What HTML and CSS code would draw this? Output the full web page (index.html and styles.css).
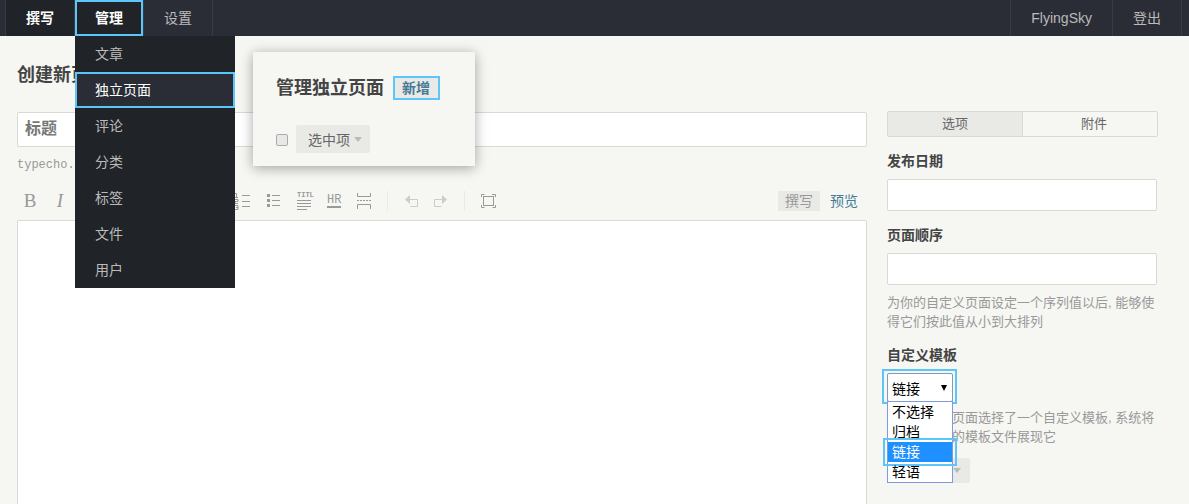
FILE: index.html
```html
<!DOCTYPE html>
<html lang="zh-CN">
<head>
<meta charset="utf-8">
<title>创建新页面</title>
<link rel="stylesheet" href="styles.css">
</head>
<body>
<nav class="topbar">
  <ul class="nav-left">
    <li class="nav-item nav-write"><a>撰写</a></li>
    <li class="nav-item nav-manage">
      <a class="inspected">管理</a>
      <ul class="dropdown">
        <li>文章</li>
        <li class="current inspected">独立页面</li>
        <li>评论</li>
        <li>分类</li>
        <li>标签</li>
        <li>文件</li>
        <li>用户</li>
      </ul>
    </li>
    <li class="nav-item"><a>设置</a></li>
  </ul>
  <ul class="nav-right">
    <li class="nav-item"><a>FlyingSky</a></li>
    <li class="nav-item"><a>登出</a></li>
  </ul>
</nav>

<main class="page">
  <h1 class="page-title">创建新页面</h1>
  <div class="columns">
    <section class="editor-col">
      <div class="title-box">标题</div>
      <p class="slug">typecho.x/index.php/</p>
      <div class="toolbar">
        <span class="tool serif bold">B</span>
        <span class="tool serif italic">I</span>
        <span class="sep"></span>
        <span class="tool"></span><span class="tool"></span><span class="tool"></span><span class="tool"></span>
        <span class="sep"></span>
        <span class="tool"><svg class="ico" viewBox="0 0 20 20"><path d="M1 2.500h1.500v4M1 6.500h3M1 8.500h3v2h-3v2h3M1 14.500h3v2h-2M4 16.500v2h-3M8 4.500h8M8 10.500h8M8 15.500h8"/></svg></span>
        <span class="tool"><svg class="ico" viewBox="0 0 20 20"><path d="M8 4.500h8M8 9.500h8M8 14.500h8"/><path class="fill" d="M3 3h3v3h-3zM3 8h3v3h-3zM3 13h3v3h-3z"/></svg></span>
        <span class="tool"><svg class="ico" viewBox="0 0 20 20"><text class="ico-text" x="3" y="6">TITL</text><path d="M3 9.500h14M3 12.500h14M3 15.500h14M3 18.500h10"/></svg></span>
        <span class="tool"><svg class="ico" viewBox="0 0 20 20"><text class="ico-text large" x="3" y="12">HR</text><path class="thick" d="M3 16h14"/></svg></span>
        <span class="tool"><svg class="ico" viewBox="0 0 20 20"><path d="M3.500 2v3.500h13v-3.500M3.500 18v-4.500h13v4.500"/><path d="M3 9.500h14" stroke-dasharray="2 1"/></svg></span>
        <span class="sep"></span>
        <span class="tool"><svg class="ico off" viewBox="0 0 20 20"><path d="M9 8.500h7.500v7h-7"/><path class="fill" d="M9 4v9l-5-4.500z"/></svg></span>
        <span class="tool"><svg class="ico off" viewBox="0 0 20 20"><path d="M11 8.500h-7.500v7h7"/><path class="fill" d="M11 4v9l5-4.500z"/></svg></span>
        <span class="sep"></span>
        <span class="tool"><svg class="ico" viewBox="0 0 20 20"><rect x="5.500" y="5.500" width="10" height="9"/><path d="M3.500 6v-2.500h3M14 3.500h3.500v2.500M17.500 14v2.500h-3M6.500 16.500h-3v-2.500"/></svg></span>
        <div class="mode-tabs"><span class="mode active">撰写</span><span class="mode link">预览</span></div>
      </div>
      <div class="editor"></div>
    </section>

    <aside class="side-col">
      <div class="tabs"><span class="tab active">选项</span><span class="tab second">附件</span></div>
      <div class="field first">
        <label class="label">发布日期</label>
        <div class="input"></div>
      </div>
      <div class="field">
        <label class="label">页面顺序</label>
        <div class="input"></div>
        <p class="desc">为你的自定义页面设定一个序列值以后, 能够使得它们按此值从小到大排列</p>
      </div>
      <div class="field">
        <label class="label">自定义模板</label>
        <div class="select-wrap">
          <div class="select-box"><span>链接</span><span class="select-arrow"></span></div>
          <span class="select-ring"></span>
          <ul class="select-list">
            <li>不选择</li>
            <li>归档</li>
            <li class="selected">链接<span class="selected-ring"></span></li>
            <li>轻语</li>
          </ul>
        </div>
        <p class="desc close">如果你为此页面选择了一个自定义模板, 系统将按照你选择的模板文件展现它</p>
      </div>
      <span class="btn more">高级选项<i class="caret"></i></span>
    </aside>
  </div>

  <div class="popup">
    <div class="popup-head">
      <h2 class="popup-title">管理独立页面</h2>
      <span class="add-btn">新增</span>
    </div>
    <div class="popup-ops">
      <input class="check" type="checkbox">
      <span class="btn">选中项<i class="caret"></i></span>
    </div>
  </div>
</main>
</body>
</html>
```

FILE: styles.css
```css
* { box-sizing: border-box; }
html, body { margin: 0; padding: 0; }
body {
  height: 504px;
  overflow: hidden;
  background: #f6f6f3;
  color: #444;
  font-family: "Liberation Sans", "Noto Sans CJK SC", sans-serif;
  font-size: 14px;
  position: relative;
}
ul { list-style: none; margin: 0; padding: 0; }
p, h1, h2 { margin: 0; }

.topbar {
  height: 36px;
  background: #2a2d36;
  display: flex;
  justify-content: space-between;
  padding: 0 7px 0 5px;
}
.nav-left, .nav-right { display: flex; }
.nav-left { border-left: 1px solid #383b44; }
.nav-right { border-left: 1px solid #383b44; }
.nav-item { position: relative; border-right: 1px solid #383b44; }
.nav-item a {
  display: block;
  height: 36px;
  line-height: 36px;
  padding: 0 20px;
  color: #bbb;
}
.nav-write a { background: #202328; color: #fff; font-weight: 700; }
.nav-manage a { background: #202328; color: #fff; font-weight: 700; }
.inspected { box-shadow: inset 0 0 0 2px #5cc6fb; }

.dropdown {
  position: absolute;
  left: 0;
  top: 36px;
  width: 160px;
  background: #202328;
  z-index: 10;
}
.dropdown li {
  height: 36px;
  line-height: 36px;
  padding-left: 20px;
  color: #bbb;
}
.dropdown li.current { background: #2a2d36; color: #fff; }

.page { padding: 0 0 0 17px; }
.page-title {
  font-size: 18px;
  line-height: 24px;
  padding-top: 27px;
  height: 75px;
  font-weight: 700;
  color: #444;
}
.columns {
  display: grid;
  grid-template-columns: 850px 271px;
  column-gap: 20px;
  align-items: start;
}

.title-box {
  margin-top: 1px;
  height: 35px;
  line-height: 32px;
  padding-left: 7px;
  background: #fff;
  border: 1px solid #d9d9d6;
  border-radius: 2px;
  font-size: 16px;
  font-weight: 700;
  color: #777;
}
.slug {
  font-family: "Liberation Mono", monospace;
  font-size: 12px;
  line-height: 14px;
  margin-top: 11px;
  color: #999;
}
.toolbar {
  display: flex;
  align-items: center;
  height: 30px;
  margin-top: 14px;
  padding-left: 3px;
}
.tool {
  width: 20px;
  height: 20px;
  margin-right: 10px;
  color: #999;
  display: flex;
  align-items: center;
  justify-content: center;
  flex: none;
}
.serif { font-family: "Liberation Serif", serif; font-size: 19px; }
.italic { font-style: italic; }
.sep {
  width: 1px;
  height: 20px;
  margin: 0 13px 0 3px;
  background: #e9e9e6;
  flex: none;
}
.ico { width: 20px; height: 20px; display: block; fill: none; stroke: #999; stroke-width: 1; }
.ico.off { stroke: #ccc; }
.ico .fill { fill: #999; stroke: none; }
.ico.off .fill { fill: #ccc; }
.ico .thick { stroke-width: 2; }
.ico-text {
  font-family: "Liberation Mono", monospace;
  font-size: 7px;
  font-weight: 700;
  fill: #999;
  stroke: none;
}
.ico-text.large { font-size: 12px; font-weight: 400; }
.mode-tabs { margin-left: auto; display: flex; padding-right: 2px; font-size: 14px; }
.mode { height: 20px; line-height: 20px; padding: 0 7px; }
.mode.active { background: #e9e9e6; color: #999; margin-right: 3px; }
.mode.link { color: #467b96; }
.editor {
  margin-top: 4px;
  height: 400px;
  background: #fff;
  border: 1px solid #d9d9d6;
  border-radius: 2px;
}

.tabs {
  display: flex;
  height: 26px;
  border: 1px solid #d9d9d6;
  border-radius: 2px;
  color: #666;
  font-size: 13px;
}
.tab { text-align: center; line-height: 24px; }
.tab.active { flex: 0 0 135px; background: #e9e9e6; border-right: 1px solid #d9d9d6; }
.tab.second { flex: 1; padding-left: 8px; }
.field { margin-top: 14px; }
.label { display: block; font-size: 14px; font-weight: 700; line-height: 20px; color: #444; }
.input {
  width: 270px;
  height: 32px;
  margin-top: 8px;
  background: #fff;
  border: 1px solid #d9d9d6;
  border-radius: 2px;
}
.desc {
  width: 270px;
  font-size: 13px;
  line-height: 19px;
  margin-top: 8px;
  color: #999;
}
.desc.close { margin-top: 7px; }
.select-wrap { position: relative; height: 28px; margin-top: 8px; width: 66px; }
.select-box {
  height: 29px;
  display: flex;
  justify-content: space-between;
  align-items: center;
  padding: 0 5px 0 4px;
  background: #fff;
  border: 1px solid #7f9db9;
  border-radius: 2px;
  color: #000;
  font-size: 14px;
}
.select-arrow {
  width: 0;
  height: 0;
  border-left: 3px solid transparent;
  border-right: 3px solid transparent;
  border-top: 6px solid #000;
}
.select-ring {
  position: absolute;
  left: -5px;
  top: -4px;
  width: 75px;
  height: 35px;
  border: 2px solid #5cc6fb;
}
.select-list {
  position: absolute;
  left: 0;
  top: 28px;
  width: 66px;
  background: #fff;
  border: 1px solid #7e9bdc;
  z-index: 5;
  color: #000;
}
.select-list li { position: relative; height: 20px; line-height: 20px; padding-left: 4px; }
.select-list li.selected { background: #1e90ff; color: #fff; }
.selected-ring {
  position: absolute;
  left: -5px;
  top: -4px;
  width: 74px;
  height: 28px;
  border: 2px solid #5cc6fb;
}
.btn {
  display: inline-flex;
  align-items: center;
  height: 28px;
  padding: 0 8px 0 12px;
  background: #e9e9e6;
  border-radius: 2px;
  color: #666;
  font-size: 14px;
}
.more { height: 25px; margin-top: 12px; padding: 0 9px 0 8px; }
.more .caret { margin-left: 2px; }
.caret {
  display: inline-block;
  margin-left: 4px;
  width: 0;
  height: 0;
  border-left: 4px solid transparent;
  border-right: 4px solid transparent;
  border-top: 5px solid #bbb;
}

.popup {
  position: absolute;
  left: 253px;
  top: 52px;
  width: 222px;
  height: 114px;
  padding: 24px 23px 0;
  background: #f6f6f3;
  box-shadow: 0 2px 12px rgba(0, 0, 0, 0.35);
  z-index: 8;
}
.popup-head { display: flex; align-items: center; gap: 9px; }
.popup-title { font-size: 18px; line-height: 24px; font-weight: 700; color: #444; }
.add-btn {
  height: 24px;
  line-height: 20px;
  padding: 0 8px 0 7px;
  border: 2px solid #5cc6fb;
  background: #e9e9e6;
  color: #467b96;
  font-size: 14px;
  font-weight: 700;
}
.popup-ops { display: flex; align-items: center; gap: 8px; margin-top: 25px; }
.check {
  appearance: none;
  width: 12px;
  height: 12px;
  margin: 2px 0 0;
  background: #e8e8e6;
  border: 1px solid #aaa;
  border-radius: 2px;
}
```
